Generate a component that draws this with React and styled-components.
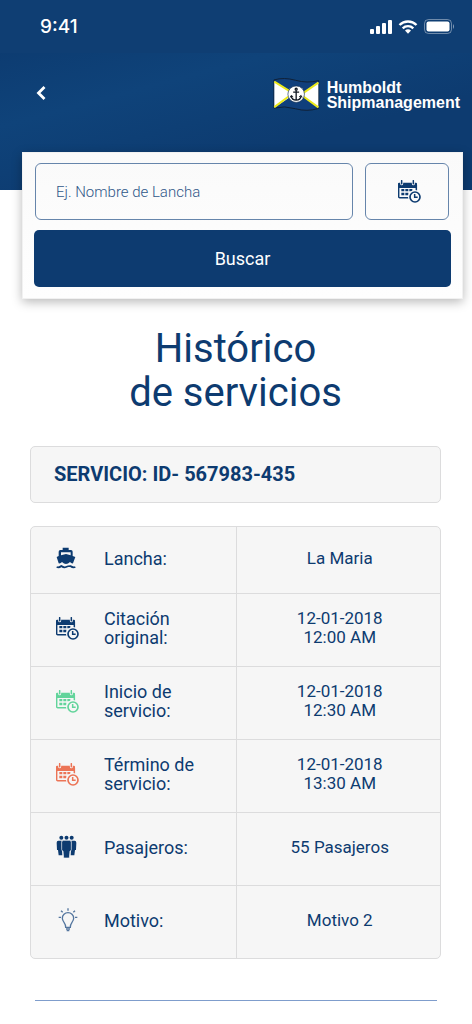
import React from 'react';
import styled, { createGlobalStyle } from 'styled-components';

const navy = '#0d3b70';
const panel = '#f6f6f6';
const line = '#dcdcdd';

const GlobalStyle = createGlobalStyle`
  *, *::before, *::after { box-sizing: border-box; }
  body {
    margin: 0;
    background: #fff;
    color: ${navy};
    font-family: Roboto, "Liberation Sans", sans-serif;
  }
`;

const Page = styled.div`
  min-height: 100vh;
`;

const Header = styled.header`
  padding-bottom: 38px;
  color: #fff;
  background: linear-gradient(165deg, #0c3a6f 10%, #0f437a 40%, #0d3b70 70%);
`;

const StatusBar = styled.div`
  display: flex;
  align-items: center;
  justify-content: space-between;
  height: 53px;
  padding: 0 17px 0 40px;
  background: #0f3e73;
`;

const Time = styled.span`
  font: 500 19px/24px Inter, sans-serif;
`;

const StatusIcons = styled.div`
  display: flex;
  align-items: center;
  gap: 6px;
`;

const NavBar = styled.nav`
  display: flex;
  align-items: flex-start;
  justify-content: space-between;
  height: 99px;
  padding: 24px 12px 0 29px;
`;

const BackButton = styled.button`
  display: flex;
  align-items: center;
  justify-content: center;
  width: 24px;
  height: 32px;
  padding: 0;
  border: 0;
  background: none;
  color: inherit;
`;

const Brand = styled.a`
  display: flex;
  align-items: center;
  gap: 7px;
  color: #fff;
  text-decoration: none;
  font: bold 16px/15px "Liberation Sans", sans-serif;
`;

const SearchCard = styled.form`
  position: relative;
  display: grid;
  gap: 10px;
  margin: -38px 9px 0 22px;
  padding: 10px 11px 11px;
  border: 1px solid #f1f1f1;
  background: linear-gradient(#fafafa, #fefefe);
  box-shadow: 0 3px 10px rgba(0, 0, 0, 0.28);
`;

const SearchFields = styled.div`
  display: flex;
  gap: 12px;
  padding: 0 2px 0 1px;
`;

const SearchInput = styled.input`
  flex: 1;
  min-width: 0;
  height: 57px;
  padding: 0 20px;
  border: 1px solid #6685ab;
  border-radius: 6px;
  background: transparent;
  color: ${navy};
  font: 300 15px/20px Roboto, sans-serif;

  &::placeholder {
    color: #2f5789;
    opacity: 1;
  }
`;

const DateButton = styled.button`
  display: flex;
  align-items: center;
  justify-content: center;
  width: 84px;
  height: 57px;
  padding: 0 0 0 4px;
  border: 1px solid #6685ab;
  border-radius: 6px;
  background: transparent;
  color: ${navy};
`;

const SubmitButton = styled.button`
  height: 57px;
  border: 0;
  border-radius: 5px;
  background: ${navy};
  color: #fff;
  font: 400 18px/24px Roboto, sans-serif;
`;

const Main = styled.main`
  padding: 28px 31px 23px 30px;
`;

const Title = styled.h1`
  margin: 0 0 31px;
  text-align: center;
  font-size: 40px;
  font-weight: 400;
  line-height: 44px;
`;

const ServiceId = styled.h2`
  margin: 0 0 23px;
  padding: 15px 23px 16px;
  border: 1px solid ${line};
  border-radius: 5px;
  background: ${panel};
  font-size: 20px;
  font-weight: 700;
  line-height: 24px;
`;

const Details = styled.table`
  width: 100%;
  table-layout: fixed;
  border: 1px solid ${line};
  border-radius: 5px;
  border-spacing: 0;
  background: ${panel};
  font-size: 18px;
  line-height: 19px;

  tr:not(:first-child) > * {
    border-top: 1px solid ${line};
  }
`;

const Row = styled.tr`
  height: ${(p) => (p.$short ? 66 : 73)}px;
`;

const LabelCell = styled.th`
  padding: 0 12px 4px 25px;
  font-weight: 400;
  text-align: left;
`;

const LabelContent = styled.div`
  display: flex;
  align-items: center;
  gap: 22px;
`;

const IconSlot = styled.span`
  display: flex;
  flex: none;
  width: 26px;
  color: ${(p) => p.$color};
`;

const LabelText = styled.span`
  white-space: pre-line;
`;

const ValueCell = styled.td`
  padding: 0 12px 4px 15px;
  border-left: 1px solid ${line};
  font-size: 17px;
  text-align: center;
  white-space: pre-line;
`;

const Divider = styled.hr`
  height: 1px;
  margin: 41px 4px 0 5px;
  border: 0;
  background: #7f9dcc;
`;

const CalendarIcon = ({ gap = panel }) => (
  <svg width="23" height="23" viewBox="0 0 69 69" aria-hidden="true">
    <rect x="2" y="11" width="53" height="42" rx="3" fill="none" stroke="currentColor" strokeWidth="4.500" />
    <path d="M0 12q0-4 4-4h49q4 0 4 4v12H0z" fill="currentColor" />
    <path d="M11 2v9M46 2v9" stroke={gap} strokeWidth="9" strokeLinecap="round" />
    <path d="M11 2v9M46 2v9" stroke="currentColor" strokeWidth="4.500" strokeLinecap="round" />
    <path d="M10 27h9v7h-9zM22 27h9v7h-9zM34 27h9v7h-9zM10 38h9v8h-9zM22 38h9v8h-9z" fill="currentColor" />
    <circle cx="51" cy="51" r="21" fill={gap} />
    <circle cx="51" cy="51" r="15" fill="none" stroke="currentColor" strokeWidth="5" />
    <path d="M50 42v10h9" fill="none" stroke="currentColor" strokeWidth="4.500" />
  </svg>
);

const BoatIcon = () => (
  <svg width="20" height="22" viewBox="47 35 60 66" aria-hidden="true">
    <path
      fill="currentColor"
      fillRule="evenodd"
      d="M67 37h18v7h7q5 0 5 5v13l8 3-7 19q-5 1-9-4-6 6-12 6t-12-6q-4 5-10 4l-6-19 6-3V49q0-5 5-5h7zM62 51v9l15-4 14 4v-9z"
    />
    <path d="M49 95q7 3 14-3 8 6 14 3t13-3q8 6 15 3" fill="none" stroke="currentColor" strokeWidth="5" />
  </svg>
);

const PeopleIcon = () => (
  <svg width="21" height="24" viewBox="47 39 63 72" fill="currentColor" aria-hidden="true">
    <circle cx="63" cy="47" r="6" />
    <circle cx="78.500" cy="47" r="6" />
    <circle cx="94" cy="47" r="6" />
    <path d="M54 56h10l2 44H55l-2-16h-3l-1-22q0-6 5-6zM103 56H93l-2 44h11l2-16h3l1-22q0-6-5-6z" />
    <path
      d="M70 55h17q6 0 6 6v22q0 4-4 4l-2 21H70l-2-21q-4 0-4-4V61q0-6 6-6z"
      stroke={panel}
      strokeWidth="2"
    />
  </svg>
);

const BulbIcon = () => (
  <svg width="24" height="26" viewBox="46 256 72 78" fill="none" stroke="currentColor" strokeWidth="4" aria-hidden="true">
    <path d="M75 317q0-8-5-15-5-6-5-12a17 17 0 0 1 34 0q0 6-5 12-5 7-5 15zM76 322h12M78 327h8" />
    <path d="M82 260v7M61 267l5 5M103 267l-5 5M54 287h7M103 287h7" />
  </svg>
);

const SignalIcon = () => (
  <svg width="22" height="14" viewBox="0 0 22 14" fill="currentColor" aria-hidden="true">
    <rect x="0" y="9" width="4" height="5" rx="1" />
    <rect x="6" y="6" width="4" height="8" rx="1" />
    <rect x="12" y="3" width="4" height="11" rx="1" />
    <rect x="18" y="0" width="4" height="14" rx="1" />
  </svg>
);

const WifiIcon = () => (
  <svg width="20" height="14" viewBox="0 0 20 14" aria-hidden="true">
    <path d="M1.500 5a12.200 12.200 0 0 1 17 0M4.700 8.300a7.600 7.600 0 0 1 10.600 0" fill="none" stroke="currentColor" strokeWidth="2.400" />
    <path d="M7 10.600a4.400 4.400 0 0 1 6 0L10 13.700z" fill="currentColor" />
  </svg>
);

const BatteryIcon = () => (
  <svg width="31" height="15" viewBox="0 0 31 15" aria-hidden="true">
    <rect x=".5" y=".5" width="27" height="14" rx="4" fill="none" stroke="#fff" opacity=".4" />
    <rect x="2.500" y="2.500" width="23" height="10" rx="2" fill="#fff" />
    <path d="M29 5q2 2.500 0 5z" fill="#fff" opacity=".5" />
  </svg>
);

const FlagLogo = () => (
  <svg width="47" height="35" viewBox="115 232 142 104" aria-hidden="true">
    <path
      d="M118 240q30-9 65 1t70 1v84q-36 11-70 1t-65-2z"
      fill="#103f7c"
      stroke="#102035"
      strokeWidth="3"
    />
    <path d="M119 244l46 30v19l-46 31zM252 246l-46 33v10l46 35z" fill="#fff" />
    <path d="M119 245l45 28M119 322l42-31M252 248l-45 31M252 323l-44-32" stroke="#ece91a" strokeWidth="6" />
    <circle cx="185" cy="283" r="25" fill="#fff" stroke="#173052" strokeWidth="2" />
    <g fill="none" stroke="#101722" strokeWidth="4">
      <circle cx="185" cy="268" r="3" />
      <path d="M185 271v30M176 277h18M170 288q2 13 15 13t15-13" />
      <path d="M167 293l3-6 6 4M194 291l6-4 3 6" strokeWidth="3" />
    </g>
  </svg>
);

const rows = [
  { label: 'Lancha:', value: 'La Maria', Icon: BoatIcon, short: true },
  { label: 'Citación\noriginal:', value: '12-01-2018\n12:00 AM', Icon: CalendarIcon },
  { label: 'Inicio de\nservicio:', value: '12-01-2018\n12:30 AM', Icon: CalendarIcon, color: '#62d49b' },
  { label: 'Término de\nservicio:', value: '12-01-2018\n13:30 AM', Icon: CalendarIcon, color: '#ec7456' },
  { label: 'Pasajeros:', value: '55 Pasajeros', Icon: PeopleIcon },
  { label: 'Motivo:', value: 'Motivo 2', Icon: BulbIcon, color: '#54769f' },
];

export default function App() {
  return (
    <Page>
      <GlobalStyle />
      <Header>
        <StatusBar>
          <Time>9:41</Time>
          <StatusIcons>
            <SignalIcon />
            <WifiIcon />
            <BatteryIcon />
          </StatusIcons>
        </StatusBar>
        <NavBar>
          <BackButton type="button" aria-label="Volver">
            <svg width="10" height="16" viewBox="0 0 10 16" aria-hidden="true">
              <path d="M8.500 2L2.500 8l6 6" fill="none" stroke="currentColor" strokeWidth="2.800" />
            </svg>
          </BackButton>
          <Brand href="#">
            <FlagLogo />
            <span>
              Humboldt
              <br />
              Shipmanagement
            </span>
          </Brand>
        </NavBar>
      </Header>
      <SearchCard onSubmit={(e) => e.preventDefault()}>
        <SearchFields>
          <SearchInput type="text" aria-label="Nombre de Lancha" placeholder="Ej. Nombre de Lancha" />
          <DateButton type="button" aria-label="Elegir fecha">
            <CalendarIcon gap="#fbfbfb" />
          </DateButton>
        </SearchFields>
        <SubmitButton type="submit">Buscar</SubmitButton>
      </SearchCard>
      <Main>
        <Title>
          Histórico
          <br />
          de servicios
        </Title>
        <ServiceId>SERVICIO: ID- 567983-435</ServiceId>
        <Details>
          <tbody>
            {rows.map(({ label, value, Icon, color = navy, short }) => (
              <Row key={label} $short={short}>
                <LabelCell scope="row">
                  <LabelContent>
                    <IconSlot $color={color}>
                      <Icon />
                    </IconSlot>
                    <LabelText>{label}</LabelText>
                  </LabelContent>
                </LabelCell>
                <ValueCell>{value}</ValueCell>
              </Row>
            ))}
          </tbody>
        </Details>
        <Divider />
      </Main>
    </Page>
  );
}
